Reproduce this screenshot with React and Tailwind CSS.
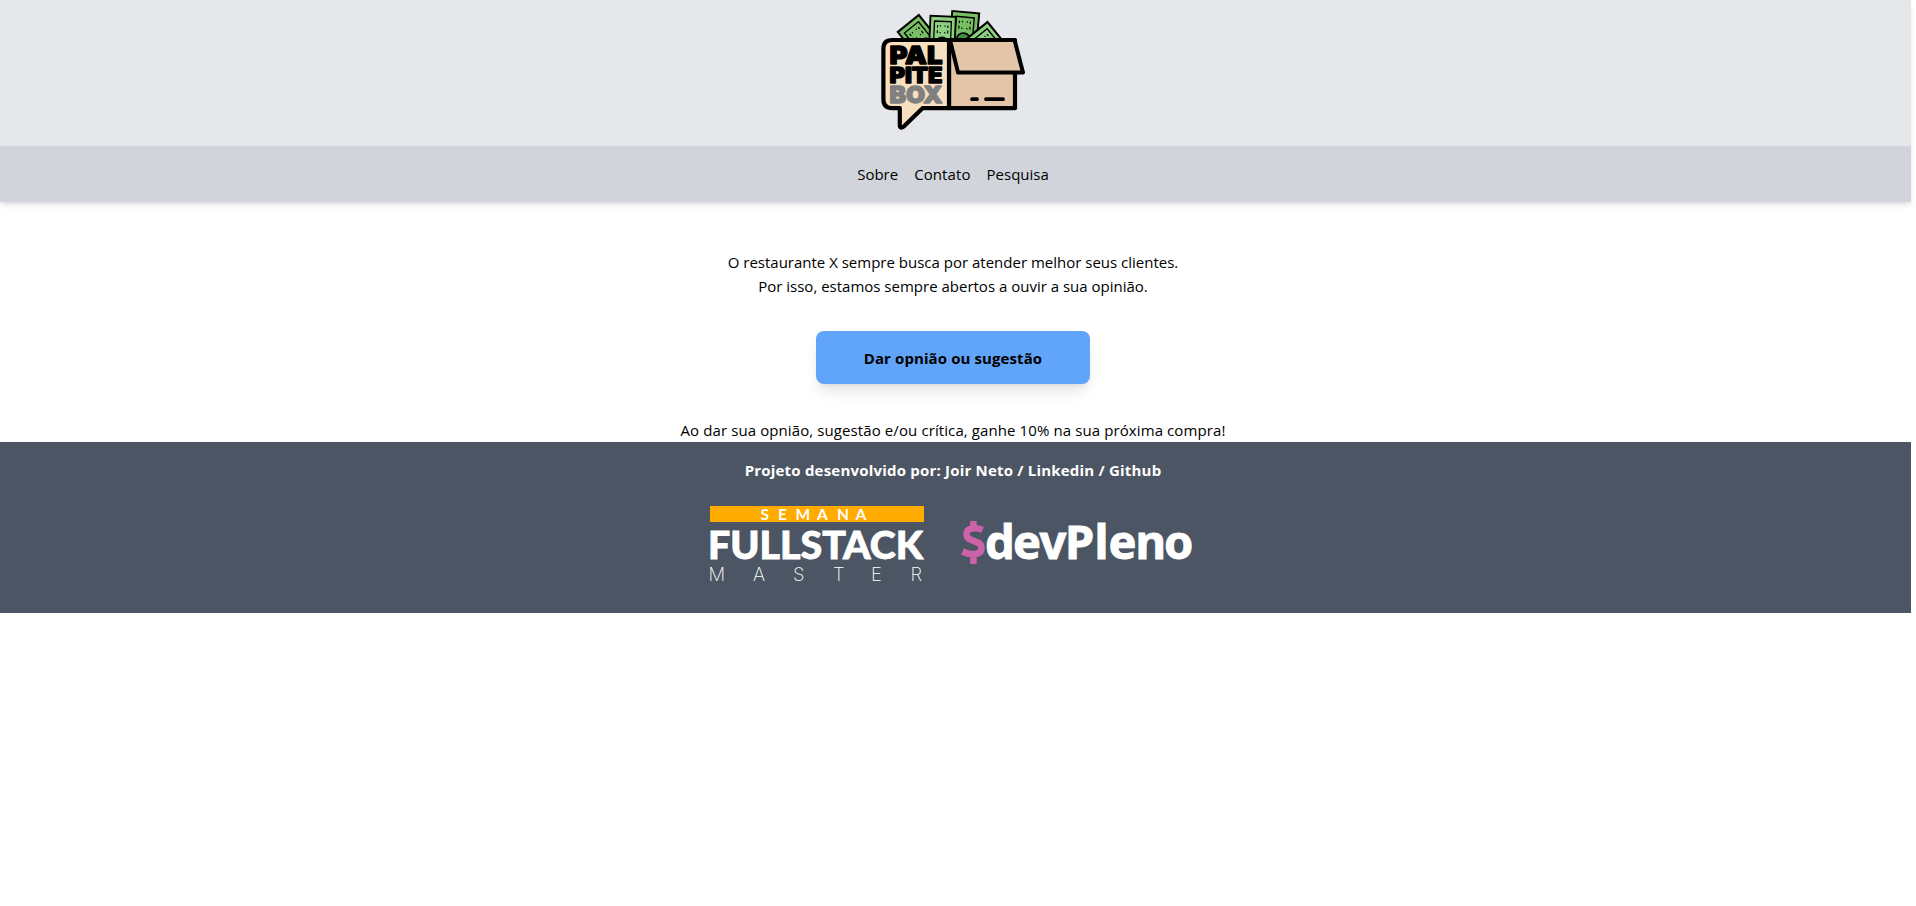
function Bill({ transform, fill = "#78be63", seal = "#78be63" }) {
  return (
    <g transform={transform}>
      <rect x="0" y="0" width="27" height="40" fill={fill} stroke="#000" strokeWidth="2" />
      <path d="M4.5 40V5H22.5V40" fill="none" stroke="#000" strokeWidth="1.4" />
      <path d="M8 9v2.5M11 9v1.3M16 9v1.3M19 9v2.5M8 14v3M11 15.7v1.3M16 15.7v1.3M19 14v3" stroke="#000" strokeWidth="1.2" />
      <circle cx="13.5" cy="28" r="7" fill={seal} stroke="#000" strokeWidth="1.6" />
    </g>
  );
}

function PalpiteLogo() {
  return (
    <svg width="170" height="140" viewBox="0 0 170 140" className="block" role="img" aria-label="Palpite Box">
      <Bill transform="translate(27.8 32) rotate(-39)" />
      <Bill transform="translate(82.3 11) rotate(5)" seal="#3d8e41" />
      <Bill transform="translate(60.5 15.8) rotate(2.5) scale(.94 1)" fill="#8fcf80" seal="#5faf55" />
      <Bill transform="translate(96.5 39) rotate(-39)" fill="#8fcf80" />
      <path d="M79 40H145V108.2H79Z" fill="#e4c5a8" stroke="#000" strokeWidth="4.2" strokeLinejoin="round" />
      <path d="M22 40H79V108.2H52.5L34 126.3Q29.8 129.5 29.8 125V108.2H22Q13.4 108.2 13.4 99.5V49Q13.4 40 22 40Z" fill="#f7dfbf" stroke="#000" strokeWidth="4.2" strokeLinejoin="round" />
      <path d="M80 40H144.5L153 72.5H88Z" fill="#e4c5a8" stroke="#000" strokeWidth="4" strokeLinejoin="round" />
      <path d="M102 99.2H107M116 99.2H133" stroke="#000" strokeWidth="3.8" strokeLinecap="round" />
      <g fontFamily="Inter, sans-serif" fontWeight="900" strokeWidth="1.3" strokeLinejoin="round">
        <text x="19.5" y="63.7" fontSize="25" textLength="53" lengthAdjust="spacingAndGlyphs" stroke="#000">PAL</text>
        <text x="19.5" y="83" fontSize="21" textLength="53" lengthAdjust="spacingAndGlyphs" stroke="#000">PITE</text>
        <text x="19.5" y="102.7" fontSize="22.5" textLength="53" lengthAdjust="spacingAndGlyphs" fill="#808080" stroke="#808080">BOX</text>
      </g>
    </svg>
  );
}

function FullstackLogo() {
  return (
    <svg width="214" height="80" viewBox="0 0 214 80" className="block overflow-visible" role="img" aria-label="Semana Fullstack Master">
      <rect width="214" height="16" fill="#ffab00" />
      <g fill="#fff">
        <text x="50.5 68 85.5 107 127 145.5" y="13.6" fontFamily="Lato, sans-serif" fontWeight="700" fontSize="15.5">SEMANA</text>
        <text x="-2" y="52.5" fontFamily="Lato, sans-serif" fontWeight="900" fontSize="37" textLength="215" lengthAdjust="spacingAndGlyphs" stroke="#fff" strokeWidth="0.8">FULLSTACK</text>
        <text x="-1.5 43 83 123 161 200.5" y="75.3" fontFamily="Inter, sans-serif" fontWeight="200" fontSize="18.5">MASTER</text>
      </g>
    </svg>
  );
}

function DevPlenoLogo() {
  return (
    <svg width="232" height="56" viewBox="0 0 232 56" className="block overflow-visible" role="img" aria-label="devPleno">
      <path d="M21.5 12C17 9.8 5.5 8.5 5.5 16C5.5 25 20.5 21 20.5 30C20.5 38 8 37 1.5 33.5M12.4 3V10M12.4 36V46" fill="none" stroke="#cc62a8" strokeWidth="6.6" />
      <text x="24 52 78.5 104 133.5 147.5 174.5 203" y="40.5" fontFamily="'Noto Sans', sans-serif" fontWeight="700" fontSize="47" fill="#fff" stroke="#fff" strokeWidth="0.9">
        devP<tspan dx="0">l</tspan>eno
      </text>
    </svg>
  );
}

export default function App() {
  return (
    <div className="w-[1911px] bg-white font-['Open_Sans','Noto_Sans',sans-serif] text-[15px] leading-6 text-black">
      <header className="shadow-md">
        <div className="flex h-[146px] justify-center bg-[#e5e7eb] pr-[1px]">
          <PalpiteLogo />
        </div>
        <nav className="flex h-14 items-center justify-center gap-4 bg-[#d1d5db] pr-[5px]">
          <a href="#sobre">Sobre</a>
          <a href="#contato" className="tracking-[0.1px]">Contato</a>
          <a href="#pesquisa">Pesquisa</a>
        </nav>
      </header>
      <main className="flex flex-col items-center pr-[5px] pt-12">
        <p>O restaurante X sempre busca por atender melhor seus clientes.</p>
        <p>Por isso, estamos sempre abertos a ouvir a sua opinião.</p>
        <a href="#pesquisa" className="mb-[34px] mt-[33px] flex h-[53px] w-[274px] items-center justify-center rounded-lg bg-[#60a5fa] font-bold tracking-[0.1px] shadow-lg">
          Dar opnião ou sugestão
        </a>
        <p className="tracking-[0.1px]">Ao dar sua opnião, sugestão e/ou crítica, ganhe 10% na sua próxima compra!</p>
      </main>
      <footer className="flex h-[171px] flex-col items-center bg-[#4b5563] pr-[8px] pt-4 text-white">
        <p className="pl-[3px] font-bold tracking-[0.2px]">Projeto desenvolvido por: Joir Neto / Linkedin / Github</p>
        <div className="flex gap-[37px] pt-6">
          <FullstackLogo />
          <div className="pt-3"><DevPlenoLogo /></div>
        </div>
      </footer>
    </div>
  );
}
